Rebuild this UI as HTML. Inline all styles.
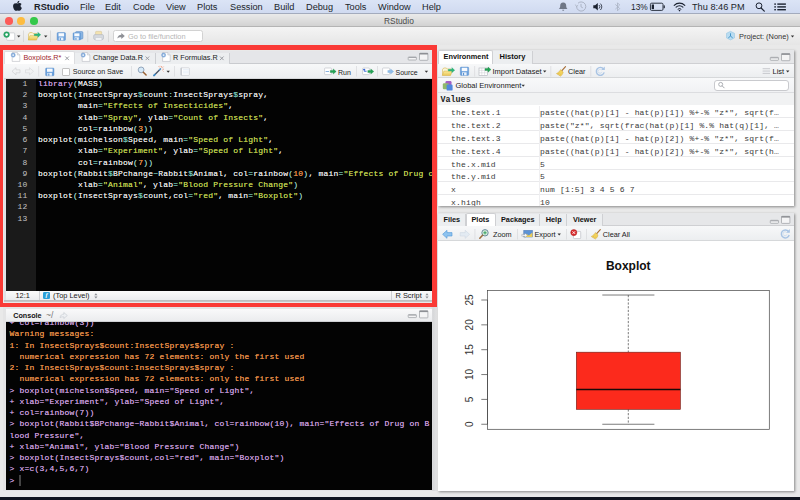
<!DOCTYPE html>
<html lang="en">
<head>
<meta charset="utf-8">
<title>RStudio</title>
<style>
*{box-sizing:border-box;margin:0;padding:0}
html,body{width:800px;height:500px;overflow:hidden;background:#e9e9e9}
body{position:relative;font-family:"Liberation Sans",sans-serif;font-size:8px;color:#222;-webkit-font-smoothing:antialiased}
.abs{position:absolute}
.t{position:absolute;white-space:pre;line-height:1}
/* mac menu bar */
#menubar{left:0;top:0;width:800px;height:14px;background:linear-gradient(#dbe4f6,#d0daf0);border-bottom:1px solid #a3abbd}
#menubar .t{font-size:9.2px;color:#1b1f2a;top:2.5px}
/* window title */
#titlebar{left:0;top:14px;width:800px;height:13px;background:linear-gradient(#eaeaea,#d2d2d2);border-bottom:1px solid #b4b4b4}
#toolbar{left:0;top:27px;width:800px;height:18px;background:linear-gradient(#f4f4f4,#e6e6e6)}
.dot{position:absolute;width:7.6px;height:7.6px;border-radius:50%;top:17.2px}
/* panes */
.pane{position:absolute;background:#fff}
#env,#plots{box-shadow:0.5px 1px 2.5px rgba(0,0,0,0.42)}
.hdr{position:absolute;left:0;top:0;right:0;background:#e6e7e9}
.tb{position:absolute;left:0;right:0;background:linear-gradient(#f7f8f9,#eceef0);border-bottom:1px solid #d6d8da}
.tab{position:absolute;top:0;height:100%;font-size:7.6px;color:#222;white-space:pre}
.ui{font-size:7.6px;color:#1a1a1a}
.mono{font-family:"Liberation Mono",monospace}
pre.mono.p,pre.mono.k{text-shadow:0 0 0.4px currentColor}
/* code colours */
.k{color:#c397d8}.s{color:#b9ca4a}.n{color:#e78c45}.o{color:#70c0b1}.p{color:#dedede}.pa{color:#8fc7bd}
</style>
</head>
<body>

<!-- ===== macOS menu bar ===== -->
<div id="menubar" class="abs">
  <span class="t" style="left:34px;font-weight:bold">RStudio</span>
  <span class="t" style="left:80px">File</span>
  <span class="t" style="left:105px">Edit</span>
  <span class="t" style="left:133px">Code</span>
  <span class="t" style="left:166px">View</span>
  <span class="t" style="left:197px">Plots</span>
  <span class="t" style="left:230px">Session</span>
  <span class="t" style="left:274px">Build</span>
  <span class="t" style="left:306px">Debug</span>
  <span class="t" style="left:345px">Tools</span>
  <span class="t" style="left:378px">Window</span>
  <span class="t" style="left:422px">Help</span>
  <span class="t" style="left:631px;font-size:8.4px;top:3px">13%</span>
  <span class="t" style="left:692px">Thu 8:46 PM</span>
</div>

<svg class="abs" style="left:0;top:0" width="800" height="14" viewBox="0 0 800 14">
  <!-- apple -->
  <path d="M17.6 3.6 c-1.2 -0.7 -2.6 -0.5 -3.3 0 c-1.5 1 -1.6 3.4 -0.5 5.3 c0.6 1.1 1.4 2 2.3 1.9 c0.6 -0.1 0.9 -0.4 1.6 -0.4 c0.7 0 1 0.4 1.7 0.4 c0.9 0 1.6 -1 2.1 -2 c0.2 -0.4 0.3 -0.6 0.4 -1 c-1.6 -0.6 -1.9 -3 -0.3 -3.9 c-0.6 -0.8 -1.6 -1.1 -2.4 -1 c-0.7 0.1 -1.1 0.4 -1.6 0.7z M17.3 3.1 c-0.1 -1.1 0.9 -2.3 2 -2.4 c0.2 1.2 -0.9 2.4 -2 2.4z" fill="#1b2230"/>
  <!-- bell -->
  <path d="M563.2 2.4 c2.2 0 3 1.6 3 3.4 c0 1.7 0.5 2.5 1.4 3.3 h-8.8 c0.9 -0.8 1.4 -1.6 1.4 -3.3 c0 -1.8 0.8 -3.4 3 -3.4z M562.2 9.7 h2 c0 1.3 -2 1.3 -2 0z" fill="#6f7786"/>
  <!-- time machine -->
  <g fill="none" stroke="#a7afbf" stroke-width="0.9"><path d="M576.6 6.2 a4.6 4.6 0 1 0 1.4 -3"/><path d="M581 3.9 v2.9 l1.8 1"/><path d="M575.4 4.6 l1.1 1.9 1.7 -1.3" stroke-width="0.8"/></g>
  <!-- volume -->
  <path d="M593.3 5.3 h1.9 l2.6 -2.2 v7.4 l-2.6 -2.2 h-1.9z" fill="#1b2230"/>
  <g fill="none" stroke="#1b2230" stroke-width="0.8"><path d="M599 5 a2.4 2.4 0 0 1 0 3.6"/><path d="M600.4 3.6 a4.4 4.4 0 0 1 0 6.4"/></g>
  <!-- bluetooth -->
  <path d="M615.3 4.4 l4.4 4.2 -2.2 2.2 v-8 l2.2 2.2 -4.4 4.2" fill="none" stroke="#aab2c3" stroke-width="0.8"/>
  <!-- battery -->
  <rect x="650.4" y="3.2" width="12.6" height="7.2" rx="1.2" fill="none" stroke="#1b2230" stroke-width="0.9"/>
  <rect x="663.6" y="5.4" width="1.2" height="2.8" fill="#1b2230"/>
  <rect x="651.7" y="4.5" width="2.3" height="4.6" fill="#1b2230"/>
  <!-- wifi -->
  <g fill="none" stroke="#1b2230" stroke-width="1.1" stroke-linecap="round"><path d="M674.2 5.3 a7.5 7.5 0 0 1 10.6 0"/><path d="M676.1 7.2 a4.8 4.8 0 0 1 6.8 0"/><path d="M678 9.1 a2.1 2.1 0 0 1 3 0" stroke-width="1"/></g>
  <circle cx="679.5" cy="10.6" r="0.8" fill="#1b2230"/>
  <!-- spotlight -->
  <circle cx="759" cy="5.8" r="2.9" fill="none" stroke="#1b2230" stroke-width="1"/>
  <path d="M761.1 8 l3.2 3.2" stroke="#1b2230" stroke-width="1.2" stroke-linecap="round"/>
  <!-- notification list -->
  <g fill="#1b2230"><rect x="774.3" y="3.4" width="1.6" height="1.4"/><rect x="777.3" y="3.4" width="8.6" height="1.4"/><rect x="774.3" y="6.2" width="1.6" height="1.4"/><rect x="777.3" y="6.2" width="8.6" height="1.4"/><rect x="774.3" y="9" width="1.6" height="1.4"/><rect x="777.3" y="9" width="8.6" height="1.4"/></g>
</svg>

<!-- ===== window title bar ===== -->
<div id="titlebar" class="abs">
  <span class="t" style="left:384px;top:2.5px;font-size:8.4px;color:#4a4a4a">RStudio</span>
</div>
<div class="dot" style="left:5px;background:#fc5b57"></div>
<div class="dot" style="left:17.3px;background:#fdbc40"></div>
<div class="dot" style="left:30px;background:#34c84a"></div>

<!-- ===== main toolbar ===== -->
<div id="toolbar" class="abs">
  <div class="abs" style="left:112.6px;top:3.4px;width:90px;height:11.3px;border:1px solid #d2d2d2;border-radius:2.5px;background:#fff"></div>
  <span class="t" style="left:128px;top:5.6px;font-size:7.4px;color:#b5b5b5">Go to file/function</span>
  <span class="t" style="left:739px;top:6px;font-size:7.4px;color:#333">Project: (None)</span>
</div>
<svg class="abs" style="left:0;top:27px" width="800" height="18" viewBox="0 27 800 18">
  <defs>
    <linearGradient id="gfl" x1="0" y1="0" x2="0" y2="1"><stop offset="0" stop-color="#7fb2e6"/><stop offset="1" stop-color="#3f7fc4"/></linearGradient>
    <linearGradient id="gfo" x1="0" y1="0" x2="0" y2="1"><stop offset="0" stop-color="#fbeb9e"/><stop offset="1" stop-color="#e8c552"/></linearGradient>
    <g id="floppy">
      <rect x="0" y="0" width="8.4" height="7.8" rx="0.9" fill="#6aa0dc" stroke="#5389c8" stroke-width="0.4"/>
      <rect x="1.4" y="0.6" width="5.6" height="3.2" fill="#f7fafe"/>
      <rect x="1.7" y="4.9" width="4.6" height="2.8" fill="#eaf1fa"/>
      <rect x="2.6" y="5.5" width="1.2" height="2.2" fill="#5a93d2"/>
    </g>
    <g id="folder">
      <path d="M0.5 8.6 v-5.6 l1.2 -1.6 h2.6 l0.9 1 h3.8 v2.4" fill="#fbf5d8" stroke="#d7b74c" stroke-width="0.6"/>
      <path d="M0.3 8.9 l1.6 -4.4 h8.3 l-1.7 4.4z" fill="url(#gfo)" stroke="#d2ad3e" stroke-width="0.5"/>
      <path d="M6.2 2.7 h3.6 v-1.7 l3 2.6 -3 2.6 v-1.7 h-3.6z" fill="#2db57a" stroke="#23a069" stroke-width="0.25"/>
    </g>
    <path id="dd" d="M0 0 h3.4 l-1.7 2z" fill="#333"/>
  </defs>
  <!-- new file -->
  <rect x="6.7" y="32.9" width="8" height="7.4" rx="0.8" fill="#fff" stroke="#b9bcc2" stroke-width="0.6"/>
  <circle cx="6.6" cy="34.6" r="2.9" fill="#27a866" stroke="#1c8a51" stroke-width="0.4"/>
  <circle cx="6.6" cy="34.6" r="1.3" fill="#fff"/>
  <use href="#dd" x="17" y="35.4"/>
  <rect x="23" y="30.5" width="0.7" height="11.5" fill="#d0d0d0"/>
  <use href="#folder" x="28" y="31.2"/>
  <use href="#dd" x="44" y="35.4"/>
  <rect x="50" y="30.5" width="0.7" height="11.5" fill="#d0d0d0"/>
  <use href="#floppy" x="57.1" y="32.6"/>
  <g><rect x="75.5" y="31.6" width="7.4" height="7.4" rx="1" fill="#8fb8e4" stroke="#4f83c0" stroke-width="0.5"/>
  <use href="#floppy" x="73" y="32.8" transform="translate(73 32.8) scale(0.92) translate(-73 -32.8)"/></g>
  <rect x="87.5" y="30.5" width="0.7" height="11.5" fill="#d0d0d0"/>
  <!-- printer -->
  <rect x="95.6" y="31.4" width="6" height="4" rx="0.6" fill="#f3e2b0" stroke="#cdb67a" stroke-width="0.4"/>
  <rect x="93.7" y="34.6" width="9.8" height="4.9" rx="1.2" fill="#d5d9df" stroke="#a9aeb8" stroke-width="0.5"/>
  <rect x="95.3" y="37.6" width="6.6" height="2.8" rx="0.4" fill="#f4f5f7" stroke="#b3b7bf" stroke-width="0.4"/>
  <rect x="108" y="30.5" width="0.7" height="11.5" fill="#d0d0d0"/>
  <!-- goto arrow -->
  <path d="M117.3 38.6 c0.3 -2.6 1.8 -3.9 4 -3.9 v-1.8 l3.5 3.1 -3.5 3.1 v-1.8 c-1.7 -0.1 -3 0.3 -4 1.3z" fill="#8e9096"/>
  <!-- project icon -->
  <g transform="translate(726.5 31.3)">
    <path d="M4 0 l4 2 v4.6 l-4 2 -4 -2 v-4.6z" fill="#b9dcf1" stroke="#8fc0de" stroke-width="0.5"/>
    <path d="M4 2 v2.8 m0 0 l-2.2 1.8 m2.2 -1.8 l2.2 1.8" stroke="#3b8fc6" stroke-width="0.9" fill="none"/>
  </g>
  <use href="#dd" x="790.8" y="35.6"/>
</svg>

<!-- ===== SOURCE PANE (red annotated) ===== -->
<div class="abs" id="redbox" style="left:-3px;top:45px;width:440px;height:261.8px;border-style:solid;border-color:#fa3a36;border-width:5.5px 5px 4.5px 6.2px"></div>
<div class="pane" id="src" style="left:3.5px;top:51px;width:428.5px;height:251.4px;background:#e0e2e6">
  <!-- tab strip -->
  <div class="hdr" style="height:13px;background:#e5e6e9;border-bottom:1px solid #c9cbcf"></div>
  <div class="abs" style="left:0.5px;top:0.3px;width:70.5px;height:13.2px;background:#fff;border:1px solid #dcdde0;border-bottom:none;border-radius:2px 2px 0 0"></div>
  <span class="t ui" style="left:20px;top:3.1px;color:#a1282c;font-size:7.25px">Boxplots.R*</span>
  <div class="abs" style="left:71px;top:1.5px;width:81px;height:12px;border-right:1px solid #cdcfd3;background:#eceef0"></div>
  <span class="t ui" style="left:89.4px;top:3.1px;font-size:7.25px">Change Data.R</span>
  <div class="abs" style="left:152px;top:1.5px;width:74px;height:12px;border-right:1px solid #cdcfd3;background:#eceef0"></div>
  <span class="t ui" style="left:169.5px;top:3.1px;font-size:7.25px">R Formulas.R</span>
  <!-- editor toolbar -->
  <div class="tb" style="top:13px;height:14.5px"></div>
  <div class="abs" style="left:58.7px;top:17.2px;width:7.6px;height:7.6px;border:1px solid #c2c2c2;background:#fff;border-radius:1px"></div>
  <span class="t ui" style="left:69.3px;top:18.2px;font-size:7.1px">Source on Save</span>
  <span class="t ui" style="left:334.5px;top:17.8px;font-size:7px">Run</span>
  <span class="t ui" style="left:392px;top:17.8px;font-size:7px">Source</span>
  <svg class="abs" style="left:0;top:0" width="428.5" height="28" viewBox="4 51 428.5 28">
    <defs>
      <g id="rdoc">
        <path d="M1.6 0.4 h5.2 l2.4 2.4 v6.4 h-7.6z" fill="#fff" stroke="#a9adb5" stroke-width="0.5"/>
        <path d="M6.8 0.4 v2.4 h2.4" fill="#e9ebee" stroke="#a9adb5" stroke-width="0.4"/>
        <circle cx="2.6" cy="2.9" r="2.1" fill="#86aede" stroke="#6a94cb" stroke-width="0.4"/>
        <circle cx="2.6" cy="2.9" r="0.9" fill="#f1f6fc"/>
      </g>
      <path id="tx" d="M0 0 l3.6 3.6 M3.6 0 l-3.6 3.6" stroke="#96999f" stroke-width="0.95" fill="none"/>
      <g id="pmin"><rect x="0" y="0" width="8.2" height="3" rx="0.6" fill="#f4f4f5" stroke="#9a9ca1" stroke-width="0.7"/><rect x="0.3" y="0" width="7.6" height="1" fill="#a4a6ab"/></g>
      <g id="pmax"><rect x="0" y="0" width="8.4" height="7.1" rx="0.6" fill="#f4f4f5" stroke="#9a9ca1" stroke-width="0.7"/><rect x="0" y="-0.2" width="8.4" height="1.5" fill="#8d8f94"/></g>
      <g id="garrow"><path d="M0 1.6 h3 v-1.6 l3 2.6 -3 2.6 v-1.6 h-3z" fill="#23a455" stroke="#15803e" stroke-width="0.3"/></g>
    </defs>
    <use href="#rdoc" x="10.6" y="52.2"/>
    <use href="#tx" x="65.3" y="56.5"/>
    <use href="#rdoc" x="80.6" y="52.2"/>
    <use href="#tx" x="145.6" y="56.5"/>
    <use href="#rdoc" x="161" y="52.2"/>
    <use href="#tx" x="220" y="56.5"/>
    <use href="#pmin" x="408.2" y="57"/>
    <use href="#pmax" x="419.5" y="53.2"/>
    <!-- back / forward -->
    <path d="M12 71.3 l4 -3.6 v2.1 h4 v3 h-4 v2.1z" fill="#f1f2f3" stroke="#c9cbcf" stroke-width="0.6"/>
    <path d="M33.5 71.3 l-4 -3.6 v2.1 h-4 v3 h4 v2.1z" fill="#f1f2f3" stroke="#d3d5d8" stroke-width="0.6"/>
    <rect x="38.4" y="66" width="0.7" height="10.5" fill="#d7d8db"/>
    <use href="#floppy" x="45.6" y="68"/>
    <rect x="131.3" y="66" width="0.7" height="10.5" fill="#d7d8db"/>
    <!-- magnifier -->
    <circle cx="141.1" cy="69.9" r="2.9" fill="#d5e9f8" stroke="#7f93ab" stroke-width="0.8"/>
    <path d="M143.3 72.2 l2.8 2.8" stroke="#9a6234" stroke-width="1.5" stroke-linecap="round"/>
    <!-- wand -->
    <path d="M154 75.4 l6.4 -6.4" stroke="#4b5465" stroke-width="1.4" stroke-linecap="round"/>
    <path d="M154 75.4 l1.2 -1.2" stroke="#3b8fd0" stroke-width="1.5" stroke-linecap="round"/>
    <path d="M159.6 69.8 l0.9 -0.9" stroke="#5aa2dc" stroke-width="1.4" stroke-linecap="round"/>
    <g stroke="#e8663a" stroke-width="0.55"><path d="M161.6 66 v1.6 M164 69.2 h-1.6 M163.6 66.6 l-1.1 1.1 M158.6 66.4 l0.9 0.9 M162.6 70.6 l0.8 0.8 M160 65.8 v0.8 M163.6 71.6 v0.1"/></g>
    <use href="#dd" x="166.5" y="70.8"/>
    <rect x="174" y="66" width="0.7" height="10.5" fill="#d7d8db"/>
    <!-- notebook / compile -->
    <rect x="180.8" y="67.8" width="8.6" height="7.6" rx="0.8" fill="#fbfcfd" stroke="#c3c6cc" stroke-width="0.6"/>
    <path d="M183 69.6 h5.8 M183 71.2 h5.8 M183 72.8 h5.8" stroke="#d4e2f3" stroke-width="0.5"/>
    <rect x="180.6" y="67.8" width="1.4" height="7.6" fill="#c9ccd2"/>
    <!-- run -->
    <rect x="324.6" y="68" width="6.8" height="6.6" rx="0.7" fill="#fff" stroke="#b9bcc3" stroke-width="0.6"/>
    <rect x="325.6" y="71" width="3.4" height="0.9" fill="#7aa7dc"/>
    <use href="#garrow" x="330.2" y="68.9"/>
    <rect x="356.2" y="66" width="0.7" height="10.5" fill="#d7d8db"/>
    <!-- rerun -->
    <rect x="362.6" y="68" width="6.8" height="6.6" rx="0.7" fill="#fff" stroke="#b9bcc3" stroke-width="0.6"/>
    <path d="M364.2 69 v2.2 h2.4 M363.3 70 l0.9 -1.1 0.9 1.1" stroke="#2458d0" stroke-width="0.9" fill="none"/>
    <use href="#garrow" x="367.8" y="68.9"/>
    <rect x="377.3" y="66" width="0.7" height="10.5" fill="#d7d8db"/>
    <!-- source -->
    <rect x="382.6" y="68" width="7" height="6.6" rx="0.7" fill="#fff" stroke="#b9bcc3" stroke-width="0.6"/>
    <path d="M387.8 70.5 h2.8 v-1.6 l3 2.6 -3 2.6 v-1.6 h-2.8z" fill="#8ebdea" stroke="#6a9fd4" stroke-width="0.3"/>
    <use href="#dd" x="424.7" y="70.8"/>
  </svg>
  <!-- editor -->
  <div class="abs" id="editor" style="left:2.7px;top:27.5px;width:425.8px;height:212px;background:#030303;overflow:hidden">
    <div class="abs" style="left:0;top:0;width:29.8px;height:100%;background:#1a1a1a"></div>
    <pre class="mono abs" style="left:0;top:-0.5px;width:21.3px;text-align:right;font-size:8px;letter-spacing:0.2px;line-height:11.22px;color:#c2c2c2">1
2
3
4
5
6
7
8
9
10
11
12
13</pre>
<pre class="mono abs p" style="left:31.8px;top:-0.5px;font-size:8px;letter-spacing:0.204px;line-height:11.22px"><span class="k">library</span><span class="pa">(</span>MASS<span class="pa">)</span>
boxplot<span class="pa">(</span>InsectSprays<span class="o">$</span>count<span class="o">:</span>InsectSprays<span class="o">$</span>spray,
        main<span class="o">=</span><span class="s">"Effects of Insecticides"</span>,
        xlab<span class="o">=</span><span class="s">"Spray"</span>, ylab<span class="o">=</span><span class="s">"Count of Insects"</span>,
        col<span class="o">=</span>rainbow<span class="pa">(</span><span class="n">3</span><span class="pa">)</span><span class="pa">)</span>
boxplot<span class="pa">(</span>michelson<span class="o">$</span>Speed, main<span class="o">=</span><span class="s">"Speed of Light"</span>,
        xlab<span class="o">=</span><span class="s">"Experiment"</span>, ylab<span class="o">=</span><span class="s">"Speed of Light"</span>,
        col<span class="o">=</span>rainbow<span class="pa">(</span><span class="n">7</span><span class="pa">)</span><span class="pa">)</span>
boxplot<span class="pa">(</span>Rabbit<span class="o">$</span>BPchange<span class="o">~</span>Rabbit<span class="o">$</span>Animal, col<span class="o">=</span>rainbow<span class="pa">(</span><span class="n">10</span><span class="pa">)</span>, main<span class="o">=</span><span class="s">"Effects of Drug on Blood Pressure"</span>,
        xlab<span class="o">=</span><span class="s">"Animal"</span>, ylab<span class="o">=</span><span class="s">"Blood Pressure Change"</span><span class="pa">)</span>
boxplot<span class="pa">(</span>InsectSprays<span class="o">$</span>count,col<span class="o">=</span><span class="s">"red"</span>, main<span class="o">=</span><span class="s">"Boxplot"</span><span class="pa">)</span>
</pre>
  </div>
  <!-- status bar -->
  <div class="abs" style="left:0;top:249px;width:100%;height:2.4px;background:linear-gradient(#b9babc,#c9cacc)"></div>
  <div class="abs" style="left:2.5px;top:239.5px;width:426px;height:9.6px;background:linear-gradient(#fbfbfb,#ebecee)"></div>
  <span class="t ui" style="left:12px;top:241.3px;font-size:7.4px">12:1</span>
  <div class="abs" style="left:35.5px;top:240px;width:1px;height:9px;background:#cfd0d3"></div>
  <div class="abs" style="left:39.6px;top:240.9px;width:7px;height:7.2px;background:#2a9fd8;border-radius:1.3px"></div>
  <span class="t" style="left:42px;top:241.4px;font-size:6.4px;font-style:italic;font-weight:bold;color:#fff;font-family:'Liberation Serif',serif">f</span>
  <svg class="abs" style="left:0;top:239.5px" width="428.5" height="10" viewBox="0 0 428.5 10"><g fill="#8b8e94"><path d="M90.3 4.2 l1.6 -2 1.6 2z M90.3 5.6 l1.6 2 1.6 -2z"/><path d="M421.4 4.2 l1.6 -2 1.6 2z M421.4 5.6 l1.6 2 1.6 -2z"/></g></svg>
  <span class="t ui" style="left:49.5px;top:241.3px;font-size:7.4px">(Top Level)</span>
  <div class="abs" style="left:387.5px;top:240px;width:1px;height:9px;background:#cfd0d3"></div>
  <span class="t ui" style="left:392px;top:241.3px;font-size:7.4px">R Script</span>
</div>


<!-- ===== CONSOLE PANE ===== -->
<div class="abs" style="left:3px;top:307px;width:434px;height:184px;background:linear-gradient(90deg,#e4e4e5 0,#e4e4e5 428px,#d6d7d9 430px,#e2e2e3 434px)"></div>
<div class="pane" id="con" style="left:6px;top:308.5px;width:426px;height:181.5px;background:#030303;overflow:hidden">
  <div class="hdr" style="height:13.5px;background:linear-gradient(#f9f9fa,#ebecee);border-bottom:1px solid #cfd0d3;z-index:2"></div>
  <svg class="abs" style="left:0;top:0;z-index:3" width="426" height="13" viewBox="6 309 426 13"><use href="#pmin" x="408.2" y="314.6"/><use href="#pmax" x="419.5" y="310.8"/><path d="M60 317.6 c0.4 -2.4 1.8 -3.4 3.8 -3.4 v-1.7 l3.5 3 -3.5 3 v-1.7 c-1.6 -0.1 -2.8 0.2 -3.8 0.8z" fill="#eef0f3" stroke="#c3c7ce" stroke-width="0.6"/></svg>
  <span class="t ui" style="left:7.2px;top:3.2px;font-weight:bold;color:#111;z-index:3;font-size:7.2px">Console</span>
  <span class="t ui" style="left:40px;top:2.8px;color:#777;z-index:3;font-size:8.6px">~/</span>
<pre class="mono abs k" style="left:3.4px;top:8.5px;font-size:8px;letter-spacing:0.2px;line-height:11.27px;z-index:0">+ col=rainbow(3))
<span class="n">Warning messages:
1: In InsectSprays$count:InsectSprays$spray :
  numerical expression has 72 elements: only the first used
2: In InsectSprays$count:InsectSprays$spray :
  numerical expression has 72 elements: only the first used</span>
&gt; boxplot(michelson$Speed, main="Speed of Light",
+ xlab="Experiment", ylab="Speed of Light",
+ col=rainbow(7))
&gt; boxplot(Rabbit$BPchange~Rabbit$Animal, col=rainbow(10), main="Effects of Drug on B
lood Pressure",
+ xlab="Animal", ylab="Blood Pressure Change")
&gt; boxplot(InsectSprays$count,col="red", main="Boxplot")
&gt; x=c(3,4,5,6,7)
&gt; </pre>
  <div class="abs" style="left:13.2px;top:166.1px;width:1.4px;height:11.2px;background:#444"></div>
</div>


<!-- ===== ENVIRONMENT PANE ===== -->
<div class="pane" id="env" style="left:437.5px;top:49.5px;width:356.7px;height:156.6px;overflow:hidden">
  <div class="hdr" style="height:14px;background:#e6e7e9;border-bottom:1px solid #cfd0d3"></div>
  <div class="abs" style="left:0;top:0;width:55.5px;height:14.5px;background:#fff;border:1px solid #cfd0d3;border-bottom:none;border-radius:2px 2px 0 0"></div>
  <span class="t ui" style="left:6px;top:3.3px;font-weight:bold;color:#111;font-size:7.35px">Environment</span>
  <div class="abs" style="left:55.5px;top:1px;width:39.5px;height:13px;border-right:1px solid #cfd0d3;background:#eceef0"></div>
  <span class="t ui" style="left:62px;top:3.3px;font-weight:bold;color:#111;font-size:7.5px">History</span>
  <div class="tb" style="top:14.5px;height:14px"></div>
  <span class="t ui" style="left:55px;top:18.3px;font-size:7.5px">Import Dataset</span>
  <span class="t ui" style="left:130.5px;top:18.3px;font-size:7.3px">Clear</span>
  <span class="t ui" style="left:335px;top:18.3px;font-size:7.5px">List</span>
  <div class="abs" style="left:0;top:28.5px;width:100%;height:14.5px;background:linear-gradient(#f8f9fa,#f1f2f4);border-bottom:1px solid #dcdde0"></div>
  <span class="t ui" style="left:18px;top:32.3px;font-size:7.5px">Global Environment</span>
  <div class="abs" style="left:276.5px;top:30.5px;width:75px;height:10.5px;border:1px solid #c9cace;border-radius:3px;background:#fff"></div>
  <div class="abs" style="left:0;top:43px;width:100%;height:12.4px;background:#f1f2f3"></div>
  <span class="t mono" style="left:3px;top:46.3px;font-size:8.4px;font-weight:bold;color:#222">Values</span>
  <div class="abs" style="left:0;top:55.30px;width:100%;height:12.95px;border-bottom:1px solid #e9e9eb"></div>
  <span class="t mono" style="left:13.5px;top:59.20px;font-size:8px;letter-spacing:0.18px;color:#383838">the.text.1</span>
  <span class="t mono" style="left:102.5px;top:59.20px;font-size:8px;letter-spacing:0.18px;color:#383838">paste((hat(p)[1] - hat(p)[1]) %+-% &quot;z*&quot;, sqrt(f…</span>
  <div class="abs" style="left:0;top:68.25px;width:100%;height:12.95px;border-bottom:1px solid #e9e9eb"></div>
  <span class="t mono" style="left:13.5px;top:72.15px;font-size:8px;letter-spacing:0.18px;color:#383838">the.text.2</span>
  <span class="t mono" style="left:102.5px;top:72.15px;font-size:8px;letter-spacing:0.18px;color:#383838">paste(&quot;z*&quot;, sqrt(frac(hat(p)[1] %.% hat(q)[1], …</span>
  <div class="abs" style="left:0;top:81.20px;width:100%;height:12.95px;border-bottom:1px solid #e9e9eb"></div>
  <span class="t mono" style="left:13.5px;top:85.10px;font-size:8px;letter-spacing:0.18px;color:#383838">the.text.3</span>
  <span class="t mono" style="left:102.5px;top:85.10px;font-size:8px;letter-spacing:0.18px;color:#383838">paste((hat(p)[1] - hat(p)[2]) %+-% &quot;z*&quot;, sqrt(f…</span>
  <div class="abs" style="left:0;top:94.15px;width:100%;height:12.95px;border-bottom:1px solid #e9e9eb"></div>
  <span class="t mono" style="left:13.5px;top:98.05px;font-size:8px;letter-spacing:0.18px;color:#383838">the.text.4</span>
  <span class="t mono" style="left:102.5px;top:98.05px;font-size:8px;letter-spacing:0.18px;color:#383838">paste((hat(p)[1] - hat(p)[2]) %+-% &quot;z*&quot;, sqrt(h…</span>
  <div class="abs" style="left:0;top:107.10px;width:100%;height:12.95px;border-bottom:1px solid #e9e9eb"></div>
  <span class="t mono" style="left:13.5px;top:111.00px;font-size:8px;letter-spacing:0.18px;color:#383838">the.x.mid</span>
  <span class="t mono" style="left:102.5px;top:111.00px;font-size:8px;letter-spacing:0.18px;color:#383838">5</span>
  <div class="abs" style="left:0;top:120.05px;width:100%;height:12.95px;border-bottom:1px solid #e9e9eb"></div>
  <span class="t mono" style="left:13.5px;top:123.95px;font-size:8px;letter-spacing:0.18px;color:#383838">the.y.mid</span>
  <span class="t mono" style="left:102.5px;top:123.95px;font-size:8px;letter-spacing:0.18px;color:#383838">5</span>
  <div class="abs" style="left:0;top:133.00px;width:100%;height:12.95px;border-bottom:1px solid #e9e9eb"></div>
  <span class="t mono" style="left:13.5px;top:136.90px;font-size:8px;letter-spacing:0.18px;color:#383838">x</span>
  <span class="t mono" style="left:102.5px;top:136.90px;font-size:8px;letter-spacing:0.18px;color:#383838">num [1:5] 3 4 5 6 7</span>
  <div class="abs" style="left:0;top:145.95px;width:100%;height:12.95px;border-bottom:1px solid #e9e9eb"></div>
  <span class="t mono" style="left:13.5px;top:149.85px;font-size:8px;letter-spacing:0.18px;color:#383838">x.high</span>
  <span class="t mono" style="left:102.5px;top:149.85px;font-size:8px;letter-spacing:0.18px;color:#383838">10</span>
  <div class="abs" style="left:101.5px;top:56.1px;width:1px;height:101px;background:#efeff1"></div>
  <svg class="abs" style="left:0;top:0" width="356.5" height="45" viewBox="438 50 356.5 45">
    <use href="#pmin" x="770.3" y="57.3"/>
    <use href="#pmax" x="781.5" y="53.6"/>
    <use href="#folder" x="442" y="66.6"/>
    <use href="#floppy" x="460.3" y="67.1" transform="translate(0 -4.7) scale(1 1.07)"/>
    <rect x="474.4" y="66" width="0.7" height="10.5" fill="#d7d8db"/>
    <!-- import dataset -->
    <rect x="479" y="68" width="8.4" height="7.4" fill="#fff" stroke="#aeb2ba" stroke-width="0.6"/>
    <path d="M479 70.4 h8.4 M479 72.8 h8.4 M481.8 68 v7.4 M484.6 68 v7.4" stroke="#c3c6cc" stroke-width="0.4"/>
    <use href="#garrow" x="485" y="67"/>
    <use href="#dd" x="543" y="70.6"/>
    <rect x="550.5" y="66" width="0.7" height="10.5" fill="#d7d8db"/>
    <!-- broom -->
    <g id="broom"><path d="M565.5 66.7 l-3.6 4" stroke="#a8703a" stroke-width="1.2" stroke-linecap="round"/>
    <path d="M560.6 69.6 l2.6 2.4 c-0.2 1.6 -1.2 3.2 -2.6 4.2 l-4.2 -2.6 c1.8 -0.8 3.2 -2.2 4.2 -4z" fill="#f2d25c" stroke="#c9a036" stroke-width="0.4"/>
    <path d="M558 74.4 l1.4 -1.6 M559.6 75.4 l1.3 -1.7" stroke="#c9a036" stroke-width="0.35"/></g>
    <rect x="590.5" y="66" width="0.7" height="10.5" fill="#d7d8db"/>
    <!-- refresh -->
    <g id="refr"><path d="M603.6 69 a4 4 0 1 0 0.6 3.4" fill="none" stroke="#a9c4e4" stroke-width="1.4"/><path d="M604.8 66.5 v3.6 h-3.6z" fill="#a9c4e4"/>
    <path d="M601.6 70 a2 2 0 1 0 0.3 1.8" fill="none" stroke="#c5d8ee" stroke-width="0.8"/></g>
    <!-- list icon -->
    <g fill="#c2c4c9"><rect x="762.6" y="68.3" width="7.4" height="0.9"/><rect x="762.6" y="70.6" width="7.4" height="0.9"/><rect x="762.6" y="72.9" width="7.4" height="0.9"/></g>
    <use href="#dd" x="786" y="70.6"/>
    <!-- global env icon -->
    <rect x="445.5" y="81" width="6" height="6" rx="1.2" fill="#a25fc4"/>
    <rect x="442.8" y="83.2" width="6" height="6" rx="1.2" fill="#8fb86a"/>
    <rect x="446.6" y="84.6" width="6" height="6" rx="1.2" fill="#4f88dd"/>
    <use href="#dd" x="521.5" y="84.8"/>
    <!-- search glyph -->
    <circle cx="720.7" cy="84.4" r="2" fill="none" stroke="#9b9ea4" stroke-width="0.8"/>
    <path d="M722.2 85.9 l2 2" stroke="#9b9ea4" stroke-width="0.9" stroke-linecap="round"/>
  </svg>
</div>

<!-- ===== PLOTS PANE ===== -->
<div class="pane" id="plots" style="left:437.5px;top:212.6px;width:356.7px;height:278px;overflow:hidden">
  <div class="hdr" style="height:13.5px;background:#e6e7e9;border-bottom:1px solid #cfd0d3"></div>
  <div class="abs" style="left:0;top:1px;width:28.5px;height:12.5px;background:#eceef0;border-right:1px solid #cfd0d3"></div>
  <div class="abs" style="left:57.5px;top:1px;width:45px;height:12.5px;background:#eceef0;border-right:1px solid #cfd0d3"></div>
  <div class="abs" style="left:102.5px;top:1px;width:27px;height:12.5px;background:#eceef0;border-right:1px solid #cfd0d3"></div>
  <div class="abs" style="left:129.5px;top:1px;width:36px;height:12.5px;background:#eceef0;border-right:1px solid #cfd0d3"></div>
  <span class="t ui" style="left:6px;top:3.2px;font-weight:bold;color:#111;font-size:7.3px">Files</span>
  <div class="abs" style="left:28px;top:0;width:30px;height:14px;background:#fff;border:1px solid #cfd0d3;border-bottom:none;border-radius:2px 2px 0 0"></div>
  <span class="t ui" style="left:34px;top:3.2px;font-weight:bold;color:#111;font-size:7.3px">Plots</span>
  <span class="t ui" style="left:63.5px;top:3.2px;font-weight:bold;color:#111;font-size:7.3px">Packages</span>
  <span class="t ui" style="left:108.3px;top:3.2px;font-weight:bold;color:#111;font-size:7.3px">Help</span>
  <span class="t ui" style="left:135.5px;top:3.2px;font-weight:bold;color:#111;font-size:7.3px">Viewer</span>
  <div class="tb" style="top:13.5px;height:14.8px"></div>
  <span class="t ui" style="left:55.5px;top:18px;font-size:7.3px">Zoom</span>
  <span class="t ui" style="left:97px;top:18px;font-size:7.3px">Export</span>
  <span class="t ui" style="left:165.3px;top:18px;font-size:7.3px">Clear All</span>
  <svg class="abs" style="left:0;top:0" width="356.5" height="29" viewBox="438 213 356.5 29">
    <use href="#pmin" x="770.3" y="220.3"/>
    <use href="#pmax" x="781.5" y="216.3"/>
    <path d="M442.6 234.3 l4.4 -4 v2.3 h5 v3.4 h-5 v2.3z" fill="#8ec3ef" stroke="#4f95d6" stroke-width="0.6"/>
    <path d="M469.6 234.3 l-4.4 -4 v2.3 h-5 v3.4 h5 v2.3z" fill="#e3ebf3" stroke="#c9d3df" stroke-width="0.5"/>
    <rect x="474.6" y="229" width="0.7" height="10.5" fill="#d7d8db"/>
    <!-- zoom icon -->
    <circle cx="485" cy="232.8" r="3.2" fill="#d4ecd9" stroke="#5f7f95" stroke-width="0.9"/>
    <path d="M483.4 232.8 h3.2 M485 231.2 v3.2" stroke="#2d9b57" stroke-width="0.9"/>
    <path d="M482.6 235.2 l-2.8 3" stroke="#9a6b3a" stroke-width="1.5" stroke-linecap="round"/>
    <rect x="517.2" y="229" width="0.7" height="10.5" fill="#d7d8db"/>
    <!-- export icon -->
    <rect x="523.8" y="230.4" width="8.6" height="6.6" fill="#5d93d6" stroke="#3f6fb0" stroke-width="0.5"/>
    <path d="M523.8 237 l3 -3 2 1.6 3.6 -3 v4.4z" fill="#e8c95a"/>
    <path d="M521.8 234.4 h3 v-1.5 l2.6 2.4 -2.6 2.4 v-1.5 h-3z" fill="#f6f7f9" stroke="#7d8088" stroke-width="0.35"/>
    <use href="#dd" x="557.5" y="233.6"/>
    <rect x="566.2" y="229" width="0.7" height="10.5" fill="#d7d8db"/>
    <!-- delete plot -->
    <rect x="573.5" y="231.4" width="7.2" height="7.2" rx="0.7" fill="#fff" stroke="#b3b6bd" stroke-width="0.6"/>
    <circle cx="573.8" cy="232.6" r="3.1" fill="#d8292b" stroke="#a01618" stroke-width="0.4"/>
    <path d="M572.5 231.3 l2.6 2.6 M575.1 231.3 l-2.6 2.6" stroke="#fff" stroke-width="0.9"/>
    <rect x="586.2" y="229" width="0.7" height="10.5" fill="#d7d8db"/>
    <!-- broom -->
    <use href="#broom" x="34.8" y="162.9"/>
    <!-- refresh -->
    <g transform="translate(185 162.6)"><path d="M603.6 69 a4 4 0 1 0 0.6 3.4" fill="none" stroke="#a9c4e4" stroke-width="1.4"/><path d="M604.8 66.5 v3.6 h-3.6z" fill="#a9c4e4"/><path d="M601.6 70 a2 2 0 1 0 0.3 1.8" fill="none" stroke="#c5d8ee" stroke-width="0.8"/></g>
  </svg>
  <!-- R plot -->
  <svg class="abs" style="left:0;top:28px" width="356.5" height="250.5" viewBox="438 241 356.5 250.5" font-family="Liberation Sans, sans-serif">
    <text x="628.3" y="270.4" font-size="12" font-weight="bold" text-anchor="middle" fill="#111">Boxplot</text>
    <rect x="487.5" y="290.5" width="281.8" height="138.8" fill="none" stroke="#444" stroke-width="0.7"/>
    <g stroke="#444" stroke-width="0.7" fill="none">
      <line x1="487.5" y1="300.0" x2="487.5" y2="424.25"/>
      <line x1="481.3" y1="424.25" x2="487.5" y2="424.25"/>
      <line x1="481.3" y1="399.4" x2="487.5" y2="399.4"/>
      <line x1="481.3" y1="374.55" x2="487.5" y2="374.55"/>
      <line x1="481.3" y1="349.7" x2="487.5" y2="349.7"/>
      <line x1="481.3" y1="324.85" x2="487.5" y2="324.85"/>
      <line x1="481.3" y1="300.0" x2="487.5" y2="300.0"/>
      <line x1="628.3" y1="295.03" x2="628.3" y2="352.19" stroke-dasharray="2.2 1.5"/>
      <line x1="628.3" y1="409.34" x2="628.3" y2="424.25" stroke-dasharray="2.2 1.5"/>
      <line x1="602.3" y1="295.03" x2="654.4" y2="295.03"/>
      <line x1="602.3" y1="424.25" x2="654.4" y2="424.25"/>
    </g>
    <rect x="576.3" y="352.19" width="104.1" height="57.15" fill="#fc2a1c" stroke="#6a1d16" stroke-width="0.6"/>
    <line x1="576.3" y1="389.46" x2="680.4" y2="389.46" stroke="#1a0a08" stroke-width="1.6"/>
    <g font-size="10" fill="#333" text-anchor="middle">
      <text transform="translate(473.3 424.25) rotate(-90)">0</text>
      <text transform="translate(473.3 399.4) rotate(-90)">5</text>
      <text transform="translate(473.3 374.55) rotate(-90)">10</text>
      <text transform="translate(473.3 349.7) rotate(-90)">15</text>
      <text transform="translate(473.3 324.85) rotate(-90)">20</text>
      <text transform="translate(473.3 300.0) rotate(-90)">25</text>
    </g>
  </svg>
</div>
<!-- desktop strip -->
<div class="abs" style="left:0;top:497px;width:800px;height:3px;background:#10151f"></div>

<!-- PANES_HERE -->

</body>
</html>
